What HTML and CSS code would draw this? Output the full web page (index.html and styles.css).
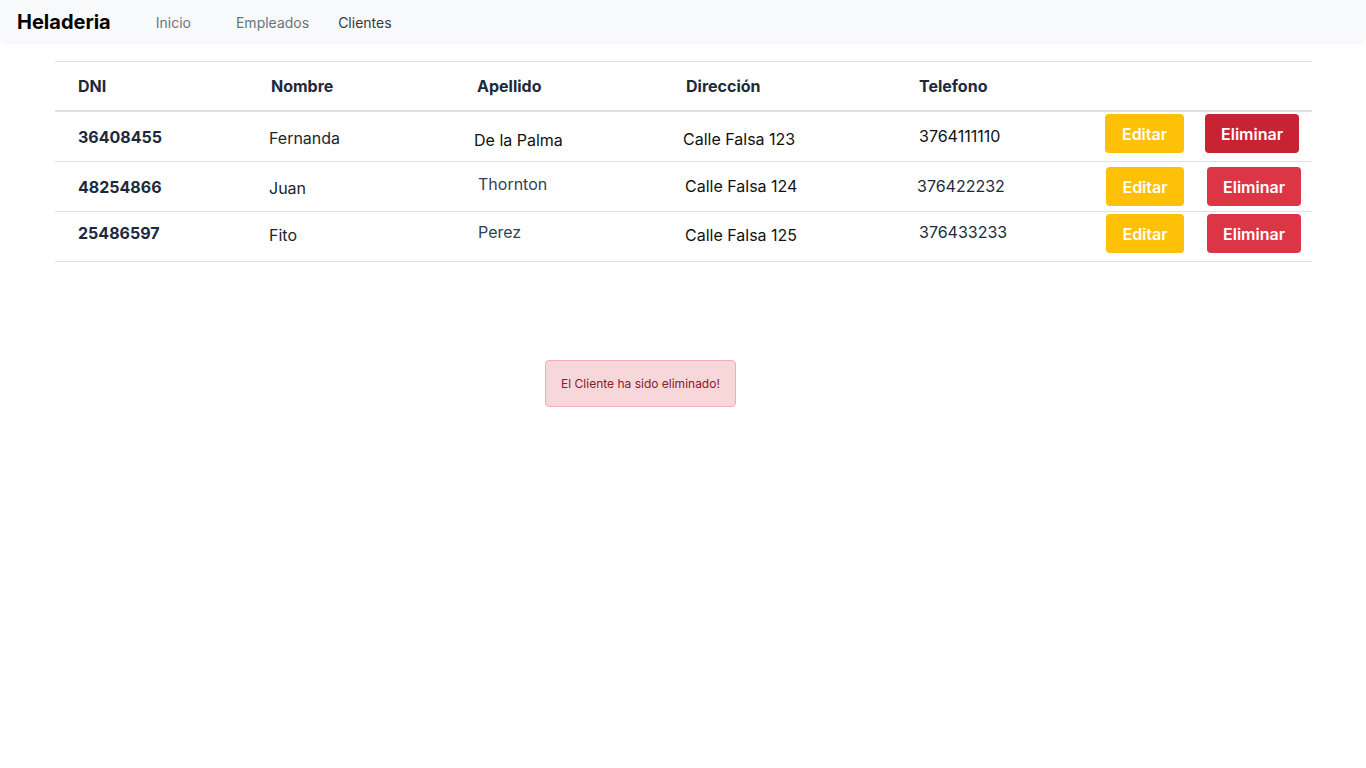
FILE: index.html
```html
<!DOCTYPE html>
<html lang="es">
<head>
<meta charset="utf-8">
<title>Heladeria</title>
<link rel="stylesheet" href="styles.css">
</head>
<body>
<nav class="navbar">
  <span class="brand">Heladeria</span>
  <a class="nav-link">Inicio</a>
  <a class="nav-link">Empleados</a>
  <a class="nav-link active">Clientes</a>
</nav>
<main class="content">
  <div class="table">
    <div class="row head">
      <div class="cell">DNI</div>
      <div class="cell">Nombre</div>
      <div class="cell">Apellido</div>
      <div class="cell">Dirección</div>
      <div class="cell">Telefono</div>
      <div class="cell"></div>
    </div>
    <div class="row">
      <div class="cell dni pt15">36408455</div>
      <div class="cell nm pt16">Fernanda</div>
      <div class="cell ap dark pt18">De la Palma</div>
      <div class="cell dir dark pt17">Calle Falsa 123</div>
      <div class="cell tel dark pt14">3764111110</div>
      <div class="cell actions first pt2">
        <button class="btn warn wide">Editar</button>
        <button class="btn danger pressed">Eliminar</button>
      </div>
    </div>
    <div class="row">
      <div class="cell dni pt15">48254866</div>
      <div class="cell nm pt16">Juan</div>
      <div class="cell ap2 slate pt12">Thornton</div>
      <div class="cell dir2 dark pt14">Calle Falsa 124</div>
      <div class="cell tel2 navy pt14">376422232</div>
      <div class="cell actions pt5">
        <button class="btn warn">Editar</button>
        <button class="btn danger">Eliminar</button>
      </div>
    </div>
    <div class="row">
      <div class="cell dni pt11">25486597</div>
      <div class="cell nm pt13">Fito</div>
      <div class="cell ap2 slate pt10">Perez</div>
      <div class="cell dir2 dark pt13">Calle Falsa 125</div>
      <div class="cell tel navy pt10">376433233</div>
      <div class="cell actions pt2">
        <button class="btn warn">Editar</button>
        <button class="btn danger">Eliminar</button>
      </div>
    </div>
  </div>
  <div class="alert-wrap">
    <div class="alert">El Cliente ha sido eliminado!</div>
  </div>
</main>
</body>
</html>
```
FILE: styles.css
```css
* { box-sizing: border-box; }
body {
  margin: 0;
  font-family: Inter, "Noto Sans", sans-serif;
  color: #212529;
  background: #fff;
}
.navbar {
  height: 44px;
  background: #f8f9fa;
  border-radius: 0 0 6px 6px;
  display: flex;
  align-items: center;
  padding-left: 17px;
}
.brand {
  font-size: 20px;
  font-weight: 700;
  color: #000;
  margin-right: 45px;
}
.nav-link {
  font-size: 14px;
  color: #6c757d;
  margin-right: 45px;
}
.nav-link:nth-of-type(2) { margin-right: 29px; }
.nav-link.active { color: #343a40; }
.content {
  padding: 17px 54px 0 55px;
}
.table {
  border-top: 1px solid #dee2e6;
}
.row {
  display: grid;
  grid-template-columns: 193px 206px 209px 233px 186px 1fr;
  height: 50px;
  border-bottom: 1px solid #dee2e6;
  align-items: start;
}
.row.head {
  align-items: center;
  border-bottom: 2px solid #dee2e6;
  font-weight: 700;
  color: #1e293b;
}
.cell {
  padding-left: 23px;
  font-size: 16px;
  line-height: 20px;
}
.dni { font-weight: 700; color: #1e293b; }
.nm { padding-left: 21px; }
.ap { padding-left: 20px; }
.ap2 { padding-left: 24px; }
.dir { padding-left: 20px; }
.dir2 { padding-left: 22px; }
.tel { padding-left: 23px; }
.tel2 { padding-left: 21px; }
.dark { color: #111; }
.slate { color: #334155; }
.navy { color: #1e293b; }
.pt2 { padding-top: 2px; }
.pt5 { padding-top: 5px; }
.pt10 { padding-top: 10px; }
.pt11 { padding-top: 11px; }
.pt12 { padding-top: 12px; }
.pt13 { padding-top: 13px; }
.pt14 { padding-top: 14px; }
.pt15 { padding-top: 15px; }
.pt16 { padding-top: 16px; }
.pt17 { padding-top: 17px; }
.pt18 { padding-top: 18px; }
.actions {
  display: flex;
  gap: 23px;
  padding-left: 24px;
}
.actions.first { gap: 21px; padding-left: 23px; }
.btn {
  font-family: Inter, "Noto Sans", sans-serif;
  font-size: 16px;
  font-weight: 600;
  color: #fff;
  border: none;
  border-radius: 4px;
  height: 39px;
  padding: 0;
}
.btn.warn { background: #ffc107; width: 78px; }
.btn.warn.wide { width: 79px; }
.btn.danger { background: #dc3545; width: 94px; }
.btn.danger.pressed { background: #c82333; }
.alert-wrap {
  display: flex;
  padding-top: 98px;
  padding-left: 490px;
}
.alert {
  width: 191px;
  height: 47px;
  background: #f8d7da;
  border: 1px solid #f1aeb5;
  border-radius: 4px;
  color: #842029;
  font-size: 12px;
  display: flex;
  align-items: center;
  justify-content: center;
}
```
